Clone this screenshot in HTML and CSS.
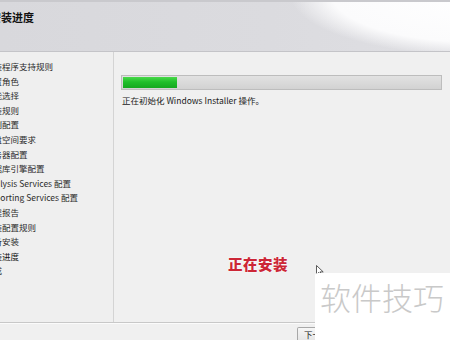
FILE: index.html
```html
<!DOCTYPE html>
<html lang="zh-CN">
<head>
<meta charset="utf-8">
<title>安装进度</title>
<link rel="stylesheet" href="styles.css">
</head>
<body>
<div class="window">
  <header class="banner">
    <h1 class="banner-title">安装进度</h1>
  </header>
  <div class="body">
    <nav class="steps">
      <ul class="step-list">
        <li>安装程序支持规则</li>
        <li>设置角色</li>
        <li>功能选择</li>
        <li>安装规则</li>
        <li>实例配置</li>
        <li>磁盘空间要求</li>
        <li>服务器配置</li>
        <li>数据库引擎配置</li>
        <li>Analysis Services 配置</li>
        <li>Reporting Services 配置</li>
        <li>错误报告</li>
        <li>安装配置规则</li>
        <li>准备安装</li>
        <li class="current">安装进度</li>
        <li>完成</li>
      </ul>
    </nav>
    <main class="content">
      <div class="progress"><div class="progress-fill" style="width:54px"></div></div>
      <p class="status">正在初始化 Windows Installer 操作。</p>
    </main>
  </div>
  <footer class="buttons">
    <button class="btn" type="button">下一步(N) &gt;</button>
  </footer>

  <div class="annotation">正在安装</div>
  <svg class="cursor" width="8" height="12" viewBox="0 0 8 12" aria-hidden="true">
    <path d="M0.5 0.5 L0.5 9.5 L2.8 7.4 L4.3 10.8 L5.6 10.2 L4.1 6.9 L7.2 6.9 Z" fill="#fff" stroke="#333" stroke-width="0.8"/>
  </svg>
  <div class="watermark">软件技巧</div>
</div>
</body>
</html>
```

FILE: styles.css
```css
* { box-sizing: border-box; }
html, body {
  margin: 0;
  padding: 0;
  width: 450px;
  height: 340px;
  overflow: hidden;
  background: #f0f0f0;
}
body {
  font-family: "Noto Sans CJK SC", "Noto Sans", sans-serif;
  color: #1a1a1a;
}
.window {
  position: relative;
  width: 450px;
  height: 340px;
  display: flex;
  flex-direction: column;
  overflow: hidden;
}
.banner {
  height: 52px;
  flex: none;
  border-top: 2px solid #c9c9cd;
  border-bottom: 1px solid #c4c4c8;
  box-shadow: 0 1px 0 #fafafa;
  background:
    radial-gradient(ellipse 190px 62px at 480px -8px, #ffffff 0%, #fbfbfc 78%, rgba(255,255,255,0) 100%),
    linear-gradient(90deg, #d8d8dc 0%, #dbdbdf 60%, #dfdfe3 100%);
  padding: 8px 0 0 0;
}
.banner-title {
  margin: 0 0 0 -10px;
  font-size: 11px;
  line-height: 14px;
  font-weight: 700;
  color: #111;
}
.body {
  flex: 1;
  display: flex;
  min-height: 0;
  border-bottom: 1px solid #c8c8c8;
  box-shadow: 0 1px 0 #fbfbfb;
}
.steps {
  width: 114px;
  flex: none;
  border-right: 1px solid #d4d4d4;
  background: #efefef;
  overflow: hidden;
  padding-top: 7px;
}
.step-list {
  list-style: none;
  margin: 0 0 0 -15px;
  padding: 0;
  font-size: 8.5px;
  line-height: 14.6px;
  white-space: nowrap;
  color: #2a2a2a;
}
.step-list li.current { color: #111; }
.content {
  flex: 1;
  background: #f0f0f0;
  padding: 23px 8px 0 7px;
}
.progress {
  width: 321px;
  height: 15px;
  border: 1px solid #bdbdbd;
  background: linear-gradient(#e2e2e2, #d2d2d2);
  padding: 1px;
}
.progress-fill {
  height: 100%;
  background: linear-gradient(#4ad94a 0%, #1fbf2a 45%, #14a81f 100%);
}
.status {
  margin: 4px 0 0 1px;
  font-size: 8.5px;
  line-height: 12px;
  color: #222;
}
.buttons {
  height: 17px;
  flex: none;
  display: flex;
  align-items: flex-end;
  padding-left: 297px;
}
.btn {
  height: 13px;
  padding: 0 0 0 6px;
  border: 1px solid #a8a8a8;
  border-bottom: none;
  border-radius: 2px 2px 0 0;
  background: linear-gradient(#f6f6f6, #e6e6e6);
  font-family: "Noto Sans CJK SC", sans-serif;
  font-size: 8.5px;
  line-height: 12px;
  color: #222;
  text-align: left;
  width: 70px;
}
.annotation {
  position: absolute;
  left: 228px;
  top: 254px;
  font-family: "Noto Sans CJK SC", serif;
  font-weight: 900;
  font-size: 14.5px;
  line-height: 20px;
  letter-spacing: 0.5px;
  color: #cc2636;
  text-shadow: 0 0 2px #fff, 0 0 1px #fff;
}
.cursor {
  position: absolute;
  left: 316px;
  top: 265px;
}
.watermark {
  position: absolute;
  left: 315px;
  top: 273px;
  width: 140px;
  height: 70px;
  background: #ffffff;
  border-radius: 3px 0 0 0;
  padding: 4px 0 0 5px;
  font-family: "Noto Sans CJK SC", sans-serif;
  font-weight: 300;
  font-size: 31px;
  line-height: 40px;
  color: #c9c9c9;
  white-space: nowrap;
}
```
